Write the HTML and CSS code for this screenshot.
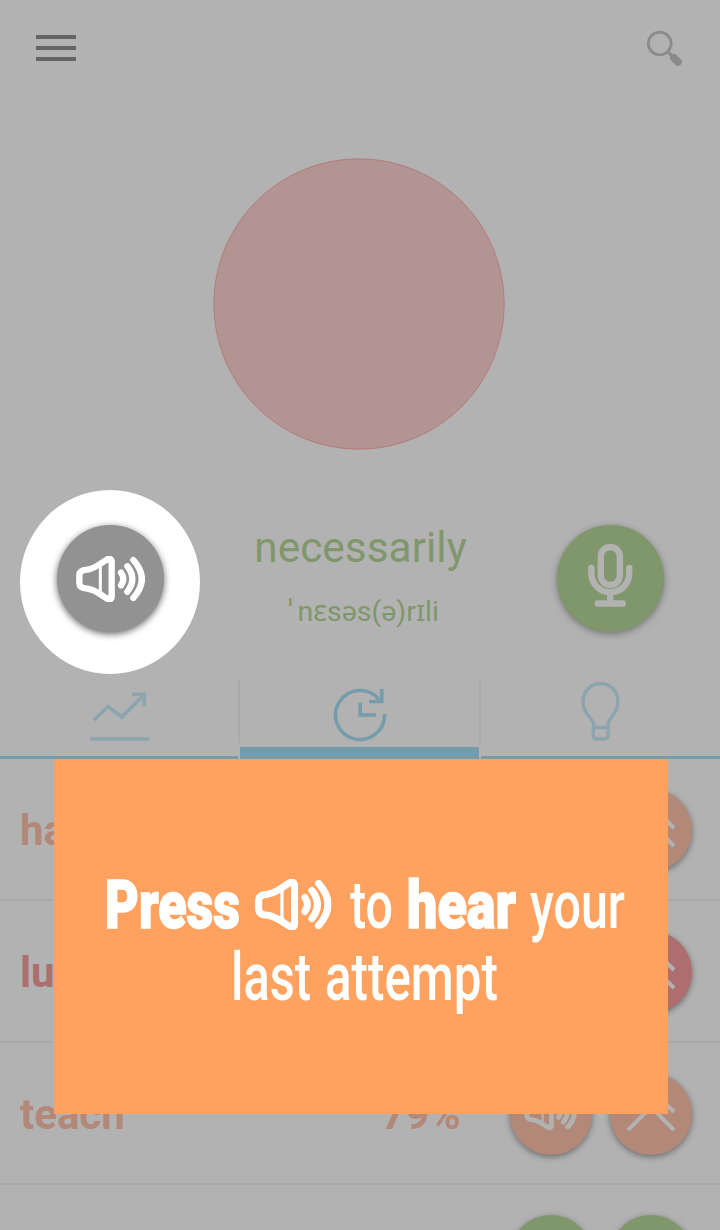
FILE: index.html
```html
<!DOCTYPE html>
<html lang="en">
<head>
<meta charset="utf-8">
<title>Pronunciation</title>
<link rel="stylesheet" href="styles.css">
</head>
<body>
<svg class="defs" width="0" height="0">
  <symbol id="speaker" viewBox="198 227 207 138">
    <g fill="none" stroke="currentColor" stroke-linecap="round" stroke-linejoin="round">
      <path stroke-width="19" d="M290 238Q305 231 305 245V348Q305 362 290 354C270 342 255 328 232 325Q208 324 208 308V285Q208 269 232 268C255 265 270 250 290 238Z"/>
      <path stroke-width="9" stroke-linecap="butt" d="M271 255V338"/>
      <path stroke-width="19" d="M333 277Q347 296 333 315M352 258Q382 296 352 334M370 239Q421 296 370 353"/>
    </g>
  </symbol>
  <symbol id="chevrons" viewBox="0 0 50 46">
    <path fill="none" stroke="currentColor" stroke-width="4" d="M2 25L25 2L48 25M2 43L25 20L48 43"/>
  </symbol>
</svg>
<main class="screen">
  <header class="topbar">
    <div class="menu"><i></i><i></i><i></i></div>
    <svg class="search" viewBox="0 0 38 38" width="38" height="38">
      <circle cx="14.7" cy="14.5" r="11.4" fill="none" stroke="#8b8b8b" stroke-width="2.8"/>
      <path d="M23 23L28 28" stroke="#8b8b8b" stroke-width="3.5"/>
      <path d="M28.8 28.8L33 33" stroke="#8b8b8b" stroke-width="7.6" stroke-linecap="round"/>
    </svg>
  </header>
  <svg class="score" width="292" height="292" viewBox="0 0 292 292">
    <circle cx="146" cy="146" r="145.2" fill="#b29493" stroke="#b57b79"/>
  </svg>
  <section class="word-row">
    <div class="round listen"><svg class="listen-icon"><use href="#speaker"/></svg></div>
    <div class="word">
      <div class="term">necessarily</div>
      <div class="ipa"><span class="stress">ˈ</span>nɛsəs(ə)rɪli</div>
    </div>
    <div class="round record">
      <svg width="46" height="66" viewBox="0 0 46 66" fill="none" stroke="#b2b2b2" stroke-width="6.4" stroke-linecap="round">
        <rect x="13.8" y="4" width="19" height="38" rx="9.5"/>
        <path d="M4.3 25V29C4.3 56 42.3 56 42.3 29V25M23.3 51V60M10.8 60.5H35.8"/>
      </svg>
    </div>
  </section>
  <nav class="tabs">
    <div class="tab">
      <svg width="60" height="50" viewBox="0 0 60 50" fill="none" stroke="#8ba4ae" stroke-width="3.6">
        <path d="M5 28L19 14.5L33 25L55 2.5M43 2.2H55.2V14.5M1 47H60"/>
      </svg>
    </div>
    <div class="tab active">
      <svg width="54" height="54" viewBox="0 0 54 54" fill="none" stroke="#759cab" stroke-width="3.6">
        <path d="M51.5 26A24.5 24.5 0 1 1 46 11.5M48.8 1V13.5H36M27.2 14.5V27H43"/>
      </svg>
    </div>
    <div class="tab">
      <svg width="40" height="60" viewBox="0 0 40 60" fill="none" stroke="#8ba4ae" stroke-width="3.4">
        <path d="M13 45.5C13 34.5 2 33.5 2 19.5A17.5 18 0 0 1 37 19.5C37 33.5 26.5 34.5 26.5 45.5ZM12.2 45V52.5Q12.2 57 16 57H23Q27.2 57 27.2 52.5V45"/>
      </svg>
    </div>
  </nav>
  <section class="history">
    <div class="attempt fair"><b class="name">ha</b><span class="mini"><svg class="chev"><use href="#chevrons"/></svg></span></div>
    <div class="attempt poor"><b class="name">lu</b><span class="mini"><svg class="chev"><use href="#chevrons"/></svg></span></div>
    <div class="attempt fair"><b class="name">teach</b><b class="percent">79%</b><span class="mini"><svg class="spk"><use href="#speaker"/></svg></span><span class="mini"><svg class="chev"><use href="#chevrons"/></svg></span></div>
    <div class="attempt good"><span class="mini"></span><span class="mini"></span></div>
  </section>
  <aside class="hint">
    <svg width="614" height="355" viewBox="54 759 614 355">
      <g class="heavy">
        <text x="105" y="927.5" textLength="135" lengthAdjust="spacingAndGlyphs">Press</text>
        <text x="407" y="927.5" textLength="109" lengthAdjust="spacingAndGlyphs">hear</text>
      </g>
      <use class="hint-icon" href="#speaker" x="255" y="879" width="76.5" height="51"/>
      <g class="light">
        <text x="350" y="927.5" textLength="43" lengthAdjust="spacingAndGlyphs">to</text>
        <text x="530" y="927.5" textLength="95" lengthAdjust="spacingAndGlyphs">your</text>
        <text x="231" y="999.5" textLength="80" lengthAdjust="spacingAndGlyphs">last</text>
        <text x="325" y="999.5" textLength="173" lengthAdjust="spacingAndGlyphs">attempt</text>
      </g>
    </svg>
  </aside>
</main>
</body>
</html>
```
FILE: styles.css
```css
* { box-sizing: border-box; }
body { margin: 0; background: #b2b2b2; font-family: Roboto, "Noto Sans", sans-serif; }
svg { display: block; flex: none; }
.defs { position: absolute; }
.screen { position: relative; width: 720px; height: 1230px; overflow: hidden; background: #b2b2b2; }
.topbar { display: flex; justify-content: space-between; align-items: flex-start; height: 158px; padding: 29px 37px 0 36px; }
.menu { display: grid; gap: 7px; padding-top: 6px; }
.menu i { width: 40px; height: 4px; background: #646464; }
.score { margin-left: 213px; }
.word-row { display: flex; justify-content: space-between; height: 229px; padding: 75px 56px 0 57px; }
.round { display: flex; flex: none; align-items: center; justify-content: center; position: relative; width: 107px; height: 107px; border-radius: 50%; }
.listen::before { content: ""; position: absolute; z-index: 0; left: -37px; top: -35px; width: 180px; height: 184px; border-radius: 50%; background: #fff; }
.listen::after { content: ""; position: absolute; inset: 0; border-radius: 50%; background: #929292; box-shadow: 0 2px 7px rgba(0,0,0,.6); }
.listen-icon { position: relative; z-index: 1; width: 69px; height: 46px; color: #fff; }
.record { background: #7f976b; box-shadow: 0 2px 7px rgba(0,0,0,.35); }
.record svg { margin-top: -6px; }
.word { text-align: center; color: #7f976b; white-space: nowrap; }
.term { font-size: 42.4px; line-height: 52px; margin-top: -3px; }
.ipa { font-size: 28.5px; line-height: 36px; margin-top: 20px; padding-left: 6px; }
.stress { margin-right: 5px; }
.tabs { display: grid; grid-template-columns: 238px 239px 239px; gap: 2px; height: 80px; background: linear-gradient(#a9a9a9,#a9a9a9) 238px 0/2px 64px no-repeat, linear-gradient(#a9a9a9,#a9a9a9) 479px 0/2px 64px no-repeat; }
.tab { display: flex; justify-content: center; align-items: flex-start; padding-top: 13px; border-bottom: 3px solid #759cab; }
.tab:last-child { padding-top: 3px; }
.active { border-bottom-width: 12px; padding-top: 9px; }
.attempt { display: flex; align-items: center; justify-content: flex-end; gap: 18px; height: 142px; padding: 1px 28.5px 0 20px; border-bottom: 2px solid #a9a9a9; color: #b28879; }
.name { margin-right: auto; font-size: 42px; padding-top: 1px; }
.percent { margin-right: 31px; font-size: 42px; padding-top: 1px; }
.mini { display: flex; flex: none; align-items: center; justify-content: center; width: 82px; height: 82px; border-radius: 50%; background: #b28879; color: #b2b2b2; box-shadow: 0 2px 6px rgba(0,0,0,.4); }
.poor { color: #ae6e6f; }
.poor .mini { background: #ae6e6f; }
.good .mini { background: #7f976b; }
.spk { width: 53px; height: 35px; margin-top: -2px; }
.chev { width: 50px; height: 46px; margin-top: -8px; }
.hint { position: absolute; z-index: 2; left: 54px; top: 759px; width: 614px; height: 355px; background: #ffa25f; color: #fff; }
.hint text { fill: #fff; font-family: Roboto, sans-serif; font-size: 66px; }
.heavy text { font-weight: 900; stroke: #fff; stroke-width: 1.6px; }
.light text { font-weight: 500; }
```
